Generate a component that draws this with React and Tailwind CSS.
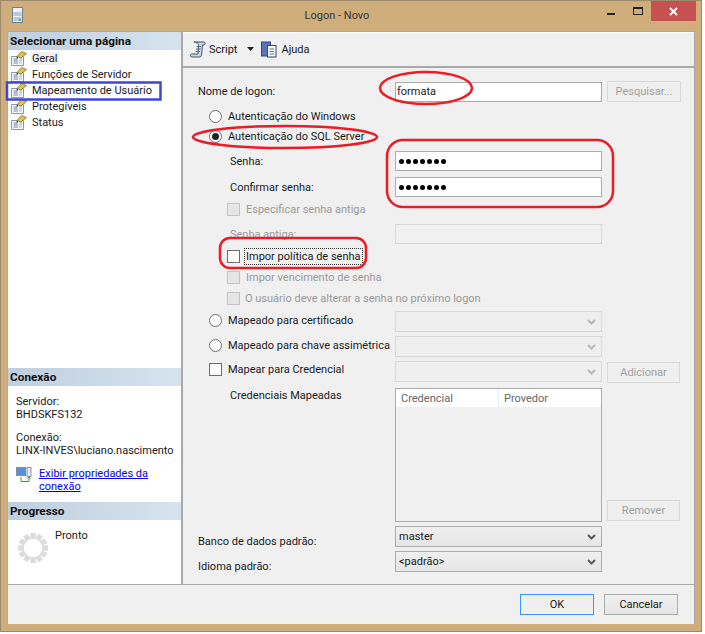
import React from "react";

const PageIcon = () => (
  <svg width="16" height="16" viewBox="0 0 16 16" className="shrink-0">
    <path d="M0.5 6.5 H12.5 V15.5 H0.5 Z" fill="#f6f8fc" stroke="#8a97ad" />
    <path d="M2.5 9 H7 M2.5 11 H7 M2.5 13 H7" stroke="#6d87b5" />
    <path d="M8 9 H11 M8 11 H11 M8 13 H11" stroke="#a9b7cf" />
    <path d="M6 6.5 L10.5 1.5 L15.5 3.5 L10 8 Z" fill="#e3c04e" stroke="#8f7426" strokeWidth="0.8" />
    <path d="M6 6.5 L5 8.5 L7.5 8 Z" fill="#444" />
  </svg>
);

const Item = ({ children, selected }) => (
  <div className="h-4 flex items-center pl-[3px] gap-[5px]">
    <PageIcon />
    <span className={selected ? "bg-[#f0f0f0] px-px -ml-px py-px" : ""}>{children}</span>
  </div>
);

const Head = ({ children }) => (
  <div className="h-[18px] shrink-0 flex items-center pl-[2px] pt-[1px] font-bold text-[11.8px] text-[#111] bg-gradient-to-r from-[#bfcfde] to-[#d6e3ef]">
    {children}
  </div>
);

const Spinner = () => (
  <svg width="32" height="32" viewBox="-16 -16 32 32">
    {Array.from({ length: 12 }).map((_, i) => (
      <rect key={i} x="-2.7" y="-15" width="5.4" height="6" fill="#dcdcdc" transform={`rotate(${i * 30})`} />
    ))}
  </svg>
);

const Radio = ({ checked }) => (
  <span className="w-[13px] h-[13px] rounded-full border border-[#6d6d6d] bg-white flex items-center justify-center shrink-0">
    {checked && <span className="w-[7px] h-[7px] rounded-full bg-[#222]" />}
  </span>
);

const Check = ({ disabled }) => (
  <span className={`w-[13px] h-[13px] border shrink-0 ${disabled ? "border-[#c4c4c4] bg-[#e6e6e6]" : "border-[#6d6d6d] bg-white"}`} />
);

const Chevron = ({ color }) => (
  <svg width="9" height="6" viewBox="0 0 9 6" fill="none">
    <path d="M1 1 L4.5 4.5 L8 1" stroke={color} strokeWidth="2" />
  </svg>
);

const Select = ({ children, disabled }) => (
  <div
    className={`w-[207px] h-[21px] border flex items-center justify-between pl-[3px] pr-[5px] ${
      disabled ? "border-[#d9d9d9] bg-[#efefef]" : "border-[#acacac] bg-gradient-to-b from-[#f0f0f0] to-[#e5e5e5]"
    }`}
  >
    <span>{children}</span>
    <Chevron color={disabled ? "#b8b8b8" : "#5a5a5a"} />
  </div>
);

const Input = ({ children, disabled }) => (
  <div
    className={`w-[207px] h-5 border flex items-center pl-[1px] ${
      disabled ? "border-[#d9d9d9] bg-[#f0f0f0]" : "border-[#acacac] bg-white"
    }`}
  >
    {children}
  </div>
);

const Dots = () => (
  <span className="flex gap-[2px] pl-[2px]">
    {Array.from({ length: 7 }).map((_, i) => (
      <span key={i} className="w-[5px] h-[5px] rounded-full bg-black" />
    ))}
  </span>
);

const DisabledButton = ({ children, className = "" }) => (
  <div className={`h-[21px] border border-[#d9d9d9] bg-[#efefef] text-[#a0a0a0] flex items-center justify-center ${className}`}>
    {children}
  </div>
);

const Label = ({ children, className = "" }) => <div className={`w-[212px] shrink-0 ${className}`}>{children}</div>;

export default function App() {
  return (
    <div className="relative w-[705px] h-[634px] bg-white overflow-hidden text-[11px] leading-none text-[#1a1a1a] font-['Roboto',sans-serif]">
      <div className="w-[702px] h-[632px] bg-[#cfae7c] border border-[#9d8a6d] flex flex-col">
        {/* title bar */}
        <div className="h-[30px] flex shrink-0">
          <div className="w-[38px] pl-[10px] pt-[6px]">
            <svg width="14" height="17" viewBox="0 0 14 17">
              <rect x="1.5" y="0.5" width="10" height="15" fill="#eef2f7" stroke="#6f7f93" />
              <rect x="2.5" y="5" width="8" height="4" fill="#b6c7de" />
              <rect x="2.5" y="10" width="8" height="4" fill="#b6c7de" />
              <rect x="8" y="12" width="2" height="2" fill="#5fae4a" />
            </svg>
          </div>
          <div className="flex-1 flex justify-center pt-[9px] pl-[28px] text-[11px] text-[#333]">Logon - Novo</div>
          <div className="flex items-start">
            <div className="w-[8px] h-[2px] bg-[#222] mt-[12px] mr-[18px]" />
            <div className="w-[10px] h-[8px] border border-[#222] border-t-[2px] mt-[6px] mr-[8px]" />
            <div className="w-[45px] h-5 bg-[#c75050] flex items-center justify-center">
              <svg width="9" height="9" viewBox="0 0 9 9">
                <path d="M1 1 L8 8 M8 1 L1 8" stroke="#fff" strokeWidth="2" />
              </svg>
            </div>
            <div className="w-[5px]" />
          </div>
        </div>
        {/* client */}
        <div className="ml-[6px] w-[688px] h-[593px] bg-[#f0f0f0] border-t border-l border-r border-[#a9a9a9] flex flex-col">
          <div className="flex h-[552px]">
            {/* left */}
            <div className="w-[175px] shrink-0 bg-white border-r-2 border-[#a9a9a9] flex flex-col">
              <Head>Selecionar uma página</Head>
              <div>
                <Item selected>Geral</Item>
                <Item>Funções de Servidor</Item>
                <Item>Mapeamento de Usuário</Item>
                <Item>Protegíveis</Item>
                <Item>Status</Item>
              </div>
              <div className="flex-1" />
              <Head>Conexão</Head>
              <div className="pl-[8px] pt-[9px] h-[116px] shrink-0 leading-[13px] flex flex-col">
                <div>Servidor:</div>
                <div>BHDSKFS132</div>
                <div className="mt-[10px]">Conexão:</div>
                <div>LINX-INVES\luciano.nascimento</div>
                <div className="flex mt-[10px]">
                  <svg width="16" height="16" viewBox="0 0 16 16" className="shrink-0">
                    <rect x="0.5" y="0.5" width="9" height="8" fill="#5b8fd6" stroke="#7c8ea8" />
                    <rect x="11" y="0.5" width="4" height="9" fill="#e8ecf2" stroke="#8494a8" />
                    <path d="M5 10 V14.5 H13 V10 M11.5 11.5 L13 10 L14.5 11.5" fill="none" stroke="#3d9a32" />
                  </svg>
                  <div className="ml-[7px] w-[115px] text-[#0000ee] underline">Exibir propriedades da conexão</div>
                </div>
              </div>
              <Head>Progresso</Head>
              <div className="flex h-[64px] shrink-0 pl-[9px] pt-[8px]">
                <div className="pt-[4px]"><Spinner /></div>
                <div className="ml-[6px] pt-[2px]">Pronto</div>
              </div>
            </div>
            {/* right */}
            <div className="flex-1 flex flex-col">
              <div className="h-[36px] shrink-0 border-t border-white border-b-2 border-b-[#a9a9a9] flex items-center pl-[7px] pb-[1px]">
                <svg width="16" height="17" viewBox="0 0 16 17">
                  <path d="M4 1 H14 C15.5 1 15.5 4 14 4 H12.5 L11.5 14 C11.4 15.5 10.5 16 9 16 H1.5 C0 16 0 13 1.5 13 H8 L8.5 3.5 C8.5 2 6 1 4 1 Z" fill="#cbd8e6" stroke="#3f566e" />
                  <path d="M6.5 5.5 H11 M6 8 H10.5 M5.5 10.5 H10" stroke="#5a7088" />
                </svg>
                <span className="ml-[3px]">Script</span>
                <svg width="7" height="4" viewBox="0 0 7 4" className="ml-[10px]"><path d="M0 0 H7 L3.5 4 Z" fill="#222" /></svg>
                <svg width="16" height="17" viewBox="0 0 16 17" className="ml-[7px]">
                  <rect x="0.5" y="1" width="9" height="14" fill="#5b76b5" stroke="#2d4480" />
                  <rect x="6.5" y="4.5" width="8.5" height="11.5" fill="#f4f6fa" stroke="#33496f" />
                  <path d="M8.5 8 H13 M8.5 10.5 H13 M8.5 13 H13" stroke="#6a7fa8" />
                </svg>
                <span className="ml-[4px]">Ajuda</span>
              </div>
              <div className="pt-[13px] flex flex-col">
                <div className="flex items-center h-[21px]">
                  <Label className="pl-[15px]">Nome de logon:</Label>
                  <Input>formata</Input>
                  <DisabledButton className="ml-[5px] w-[74px]">Pesquisar...</DisabledButton>
                </div>
                <div className="flex items-center h-5 pl-[26px] gap-[6px] mt-[4px]"><Radio /><span>Autenticação do Windows</span></div>
                <div className="flex items-center h-5 pl-[26px] gap-[6px]"><Radio checked /><span>Autenticação do SQL Server</span></div>
                <div className="flex items-center h-5 mt-[5px]"><Label className="pl-[47px]">Senha:</Label><Input><Dots /></Input></div>
                <div className="flex items-center h-5 mt-[6px]"><Label className="pl-[47px]">Confirmar senha:</Label><Input><Dots /></Input></div>
                <div className="flex items-center h-5 mt-[2px] pl-[44px] gap-[6px] text-[#9a9a9a]"><Check disabled /><span>Especificar senha antiga</span></div>
                <div className="flex items-center h-5 mt-[5px]"><Label className="pl-[47px] text-[#9a9a9a]">Senha antiga:</Label><Input disabled /></div>
                <div className="flex items-center h-5 mt-[2px] pl-[44px] gap-[5px]"><Check /><span className="outline-1 outline-dotted outline-[#333] px-px py-[2px]">Impor política de senha</span></div>
                <div className="flex items-center h-5 mt-[1px] pl-[44px] gap-[6px] text-[#9a9a9a]"><Check disabled /><span>Impor vencimento de senha</span></div>
                <div className="flex items-center h-5 mt-[1px] pl-[44px] gap-[5px] text-[#9a9a9a]"><Check disabled /><span>O usuário deve alterar a senha no próximo logon</span></div>
                <div className="flex items-center h-[21px] mt-[3px]"><div className="w-[212px] shrink-0 pl-[26px] pb-[2px] flex items-center gap-[6px]"><Radio /><span>Mapeado para certificado</span></div><Select disabled /></div>
                <div className="flex items-center h-[21px] mt-[4px]"><div className="w-[212px] shrink-0 pl-[26px] pb-[2px] flex items-center gap-[6px]"><Radio /><span>Mapeado para chave assimétrica</span></div><Select disabled /></div>
                <div className="flex items-center h-[21px] mt-[4px]">
                  <div className="w-[212px] shrink-0 pl-[26px] pb-[4px] flex items-center gap-[6px]"><Check /><span>Mapear para Credencial</span></div>
                  <Select disabled />
                  <DisabledButton className="ml-[5px] mt-[2px] w-[73px]">Adicionar</DisabledButton>
                </div>
                <div className="flex h-[134px] mt-[6px]">
                  <Label className="pl-[47px] pt-[2px]">Credenciais Mapeadas</Label>
                  <div className="w-[207px] border border-[#acacac]">
                    <div className="h-[18px] bg-white flex items-center text-[#666]">
                      <div className="w-[103px] pl-[5px] border-r border-[#e3eefb] h-full flex items-center">Credencial</div>
                      <div className="pl-[5px]">Provedor</div>
                    </div>
                  </div>
                  <div className="self-end mb-[1px]"><DisabledButton className="ml-[5px] w-[73px]">Remover</DisabledButton></div>
                </div>
                <div className="flex items-center h-[21px] mt-[4px]"><Label className="pl-[15px] pt-[9px]">Banco de dados padrão:</Label><Select>master</Select></div>
                <div className="flex items-center h-[21px] mt-[4px]"><Label className="pl-[15px] pt-[9px]">Idioma padrão:</Label><Select>&lt;padrão&gt;</Select></div>
              </div>
            </div>
          </div>
          {/* footer */}
          <div className="flex-1 border-t border-[#a9a9a9] flex justify-end items-start pt-[9px] pr-[16px] gap-[10px]">
            <div className="w-[74px] h-[21px] border border-[#3399ff] bg-[#efefef] flex items-center justify-center">OK</div>
            <div className="w-[74px] h-[21px] border border-[#acacac] bg-gradient-to-b from-[#f0f0f0] to-[#e5e5e5] flex items-center justify-center">Cancelar</div>
          </div>
        </div>
      </div>
      {/* hand-drawn annotations */}
      <svg className="absolute left-0 top-0 pointer-events-none" width="705" height="634" fill="none">
        <ellipse cx="426" cy="88" rx="46" ry="16" stroke="#ed1c24" strokeWidth="2.5" />
        <ellipse cx="285" cy="137" rx="92" ry="11" stroke="#ed1c24" strokeWidth="2.5" />
        <rect x="387" y="140" width="226" height="67" rx="16" stroke="#ed1c24" strokeWidth="2.5" />
        <rect x="220" y="238" width="146" height="30" rx="10" stroke="#ed1c24" strokeWidth="2.5" />
        <rect x="7" y="82.5" width="153.5" height="17" stroke="#3f48cc" strokeWidth="2.5" />
      </svg>
    </div>
  );
}
